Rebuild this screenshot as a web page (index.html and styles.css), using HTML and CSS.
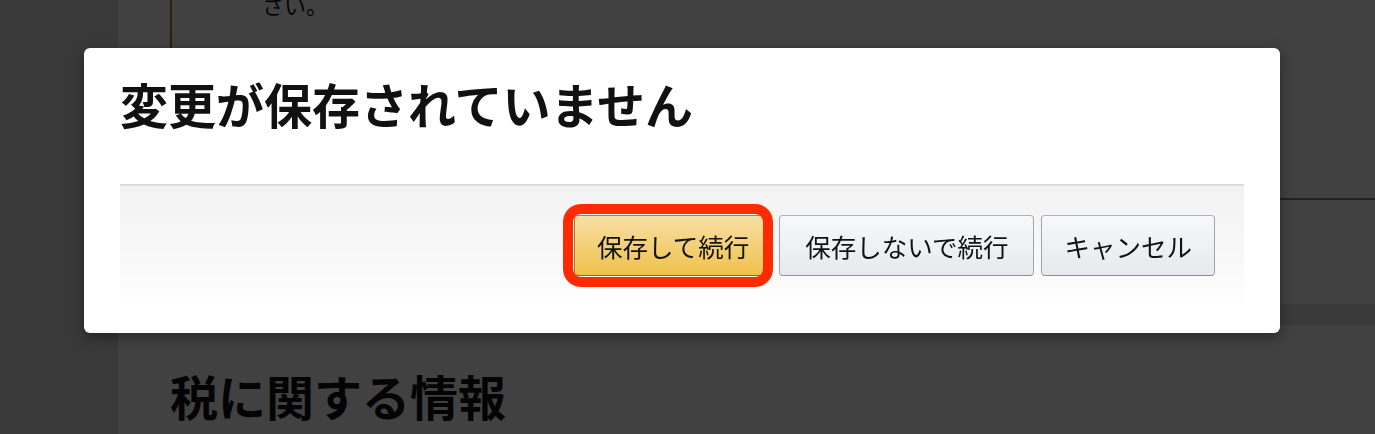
FILE: index.html
```html
<!DOCTYPE html>
<html lang="ja">
<head>
<meta charset="utf-8">
<title>変更が保存されていません</title>
<link rel="stylesheet" href="styles.css">
</head>
<body>
<div class="page">
  <aside class="rail"></aside>
  <main class="content">
    <section class="notice"><p class="notice-text">さい。</p></section>
    <div class="gap-area"></div>
    <div class="divider"></div>
    <h2 class="section-title">税に関する情報</h2>
  </main>
</div>
<div class="overlay"></div>
<div class="modal" role="dialog" aria-labelledby="modal-title">
  <h1 class="modal-title" id="modal-title">変更が保存されていません</h1>
  <div class="modal-footer">
    <div class="btn-wrap">
      <button class="btn btn-primary">保存して続行</button>
      <span class="highlight-ring"></span>
    </div>
    <button class="btn btn-secondary btn-wide">保存しないで続行</button>
    <button class="btn btn-secondary">キャンセル</button>
  </div>
</div>
</body>
</html>
```

FILE: styles.css
```css
html, body {
  margin: 0;
  padding: 0;
  height: 100%;
  overflow: hidden;
}

body {
  font-family: "Noto Sans CJK JP", "Noto Sans", sans-serif;
  color: #111;
  background: #e0e0e0;
}

.page {
  display: flex;
  min-height: 100vh;
}

.rail {
  width: 118px;
  flex: none;
  background: #e0e0e0;
}

.content {
  flex: 1;
  background: #ffffff;
  display: flex;
  flex-direction: column;
}

.notice {
  margin-left: 52px;
  height: 198px;
  border-left: 2px solid #a07c3a;
  border-bottom: 2px solid #a07c3a;
}

.notice-text {
  margin: -12px 0 0 0;
  padding-left: 90px;
  font-size: 22px;
  line-height: 1.5;
  color: #111;
}

.gap-area {
  height: 104px;
}

.divider {
  height: 21px;
  background: #e4e4e4;
}

.section-title {
  margin: 42px 0 0 52px;
  font-size: 48px;
  line-height: 1.2;
  font-weight: 700;
  color: #111;
}

.overlay {
  position: fixed;
  inset: 0;
  background: rgba(0, 0, 0, 0.745);
}

.modal {
  position: absolute;
  left: 84px;
  top: 48px;
  width: 1196px;
  box-sizing: border-box;
  padding: 27px 36px 29px;
  background: #fff;
  border-radius: 6px;
  box-shadow: 0 4px 14px rgba(0, 0, 0, 0.4);
}

.modal-title {
  margin: 0 0 51px;
  font-size: 48px;
  line-height: 1.2;
  font-weight: 700;
  color: #111;
}

.modal-footer {
  display: flex;
  justify-content: flex-end;
  align-items: center;
  gap: 7px;
  padding: 29px 29px 28px;
  border-top: 2px solid #dddddd;
  background: linear-gradient(to bottom, #f2f2f2 0%, #f7f7f7 50%, #fefefe 100%);
}

.btn-wrap {
  position: relative;
  display: flex;
}

.btn {
  height: 61px;
  padding: 0 22px;
  font-family: "Noto Sans CJK JP", "Noto Sans", sans-serif;
  font-size: 25.5px;
  color: #111;
  border-radius: 4px;
  border: 1px solid;
  cursor: pointer;
}

.btn-wide {
  padding: 0 25px;
}

.btn-primary {
  background: linear-gradient(to bottom, #f7dfa5, #f0c14b);
  border-color: #a88734 #9c7e31 #846a29;
}

.btn-secondary {
  background: linear-gradient(to bottom, #f7f8fa, #e7e9ec);
  border-color: #adb1b8 #a2a6ac #8d9096;
}

.highlight-ring {
  position: absolute;
  left: -11px;
  top: -11px;
  width: 210px;
  height: 83px;
  box-sizing: border-box;
  border: 10px solid #ff2a00;
  border-radius: 18px;
  pointer-events: none;
}
```
